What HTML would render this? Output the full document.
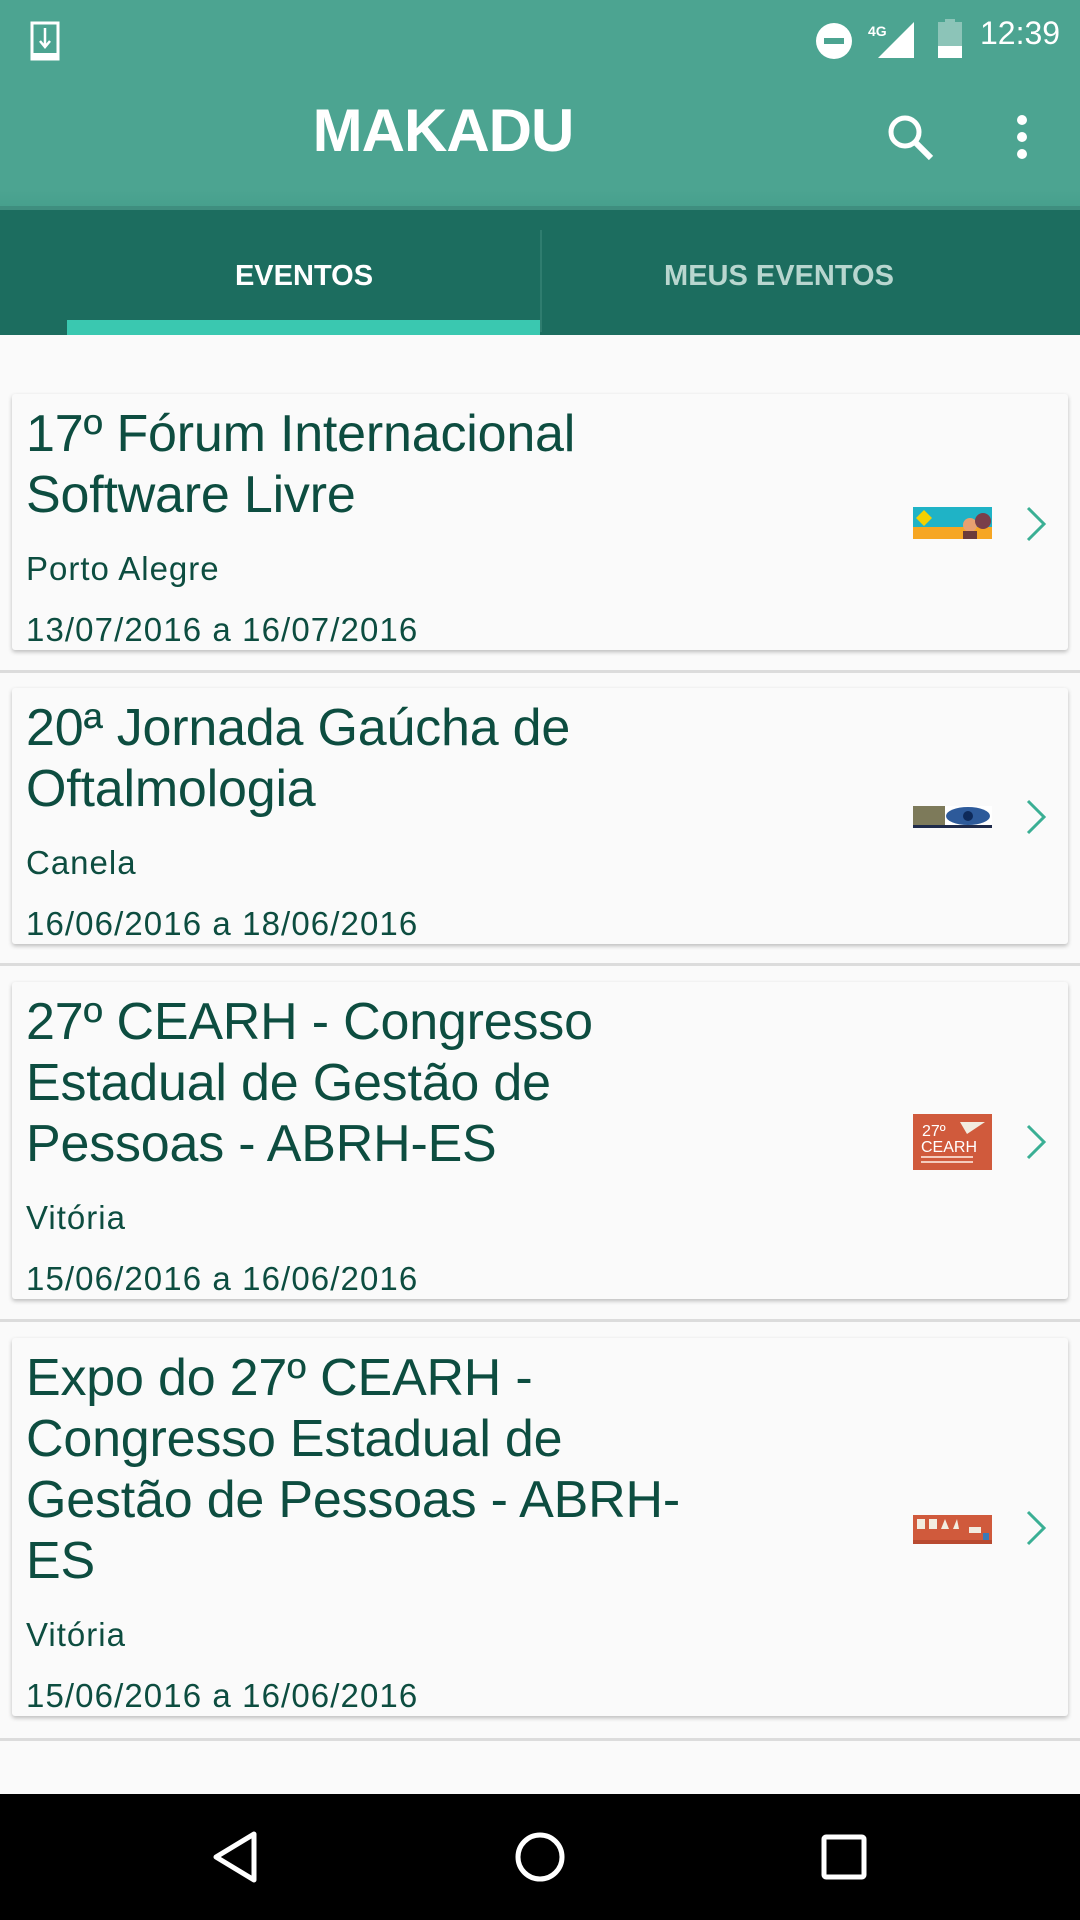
<!DOCTYPE html>
<html><head><meta charset="utf-8"><style>
*{margin:0;padding:0;box-sizing:border-box}
body{width:1080px;height:1920px;overflow:hidden;background:#fafafa;font-family:"Liberation Sans",sans-serif;position:relative}
.top{position:absolute;left:0;top:0;width:1080px;height:206px;background:#4ca491}
.topsh{position:absolute;left:0;top:190px;width:1080px;height:16px;background:linear-gradient(#4ca491,#47a08d)}
.tabs{position:absolute;left:0;top:206px;width:1080px;height:129px;background:#1c6d5f;border-top:4px solid #3f8e7f}
.sb{position:absolute;top:0;height:60px;color:#fff}
.logo{position:absolute;left:0;width:886px;text-align:center;top:96px;font-size:60px;font-weight:bold;color:#fff;letter-spacing:-1px}
.tab{position:absolute;top:260px;font-size:29px;font-weight:bold;text-align:center}
.card{position:absolute;left:12px;width:1056px;background:#fafafa;box-shadow:0 2px 4px rgba(0,0,0,.25);border-radius:3px;padding:10px 0 0 14px;color:#0d4d40}
.t{font-size:52px;line-height:61px;white-space:nowrap;letter-spacing:-0.2px}
.s{font-size:33px;line-height:50px;margin-top:18px;letter-spacing:1px}
.d{font-size:33px;line-height:40px;margin-top:16px;letter-spacing:1.1px}
.line{position:absolute;left:0;width:1080px;height:3px;background:#dcdcdc}
.img{position:absolute;left:900px}
.chev{position:absolute;left:1022px;width:30px;height:40px}
.nav{position:absolute;left:0;top:1794px;width:1080px;height:126px;background:#000}
</style></head><body>
<div class="top"></div><div class="topsh"></div>
<svg class="sb" style="left:30px;top:12px" width="34" height="42" viewBox="0 0 34 42"><rect x="2" y="2" width="26" height="36" fill="none" stroke="#fff" stroke-width="3"/><rect x="2" y="32" width="26" height="6" fill="#fff"/><path d="M15 7v18M10 20l5 6 5-6" stroke="#fff" stroke-width="2.5" fill="none"/></svg>
<svg class="sb" style="left:814px;top:10px" width="180" height="44" viewBox="0 0 180 44"><circle cx="20" cy="23" r="18" fill="#fff"/><rect x="10" y="20" width="20" height="6" fill="#4ca491"/><text x="54" y="18" font-size="14" font-weight="bold" fill="#fff" font-family="Liberation Sans">4G</text><path d="M64 40L100 4V40Z" fill="#fff"/><rect x="124" y="4" width="24" height="36" fill="#8cc4b8"/><rect x="124" y="28" width="24" height="12" fill="#fff"/><rect x="131" y="1" width="10" height="4" fill="#8cc4b8"/></svg>
<div class="sb" style="left:980px;top:15px;font-size:32px">12:39</div>
<div class="logo">MAKADU</div>
<svg style="position:absolute;left:885px;top:112px" width="52" height="52" viewBox="0 0 52 52"><circle cx="20" cy="20" r="14" fill="none" stroke="#fff" stroke-width="5"/><path d="M30 30l16 16" stroke="#fff" stroke-width="6"/></svg>
<svg style="position:absolute;left:1012px;top:114px" width="20" height="46" viewBox="0 0 20 46"><circle cx="10" cy="6" r="5" fill="#fff"/><circle cx="10" cy="23" r="5" fill="#fff"/><circle cx="10" cy="40" r="5" fill="#fff"/></svg>
<div class="tabs"></div>
<div style="position:absolute;left:540px;top:230px;width:2px;height:102px;background:#2f7d6f"></div>
<div style="position:absolute;left:67px;top:320px;width:473px;height:15px;background:#3ac8b0"></div>
<div class="tab" style="left:0;width:608px;color:#fff">EVENTOS</div>
<div class="tab" style="left:542px;width:474px;color:#b8d6cf">MEUS EVENTOS</div>

<div class="card" style="top:394px"><div class="t">17º Fórum Internacional<br>Software Livre</div><div class="s">Porto Alegre</div><div class="d">13/07/2016 a 16/07/2016</div></div>
<div class="line" style="top:670px"></div>
<div class="card" style="top:688px"><div class="t">20ª Jornada Gaúcha de<br>Oftalmologia</div><div class="s">Canela</div><div class="d">16/06/2016 a 18/06/2016</div></div>
<div class="line" style="top:963px"></div>
<div class="card" style="top:982px"><div class="t">27º CEARH - Congresso<br>Estadual de Gestão de<br>Pessoas - ABRH-ES</div><div class="s">Vitória</div><div class="d">15/06/2016 a 16/06/2016</div></div>
<div class="line" style="top:1319px"></div>
<div class="card" style="top:1338px"><div class="t">Expo do 27º CEARH -<br>Congresso Estadual de<br>Gestão de Pessoas - ABRH-<br>ES</div><div class="s">Vitória</div><div class="d">15/06/2016 a 16/06/2016</div></div>
<div class="line" style="top:1738px"></div>

<svg class="img" style="left:913px;top:507px" width="79" height="32"><rect width="79" height="20" fill="#1fb3c6"/><rect y="20" width="79" height="12" fill="#f6a623"/><circle cx="57" cy="18" r="7" fill="#e8a070"/><rect x="50" y="24" width="14" height="8" fill="#6b3a3a"/><circle cx="70" cy="14" r="8" fill="#7a3f4a"/><polygon points="11,3 19,11 11,19 3,11" fill="#f5d000"/></svg>
<svg class="img" style="left:913px;top:806px" width="79" height="22"><rect width="79" height="22" fill="#fff"/><rect width="32" height="20" fill="#7d7a5a"/><ellipse cx="55" cy="10" rx="22" ry="9" fill="#2d5a9a"/><circle cx="55" cy="10" r="5" fill="#0e2a5a"/><rect y="19" width="79" height="3" fill="#1e2a4a"/></svg>
<svg class="img" style="left:913px;top:1114px" width="79" height="56"><rect width="79" height="56" fill="#d05a3c"/><text x="9" y="22" font-size="16" fill="#fff" font-family="Liberation Sans">27º</text><text x="8" y="38" font-size="16" fill="#fff" font-family="Liberation Sans">CEARH</text><rect x="8" y="42" width="52" height="2" fill="#f4cbbd"/><rect x="8" y="47" width="52" height="2" fill="#f4cbbd"/><polygon points="47,8 72,8 54,20" fill="#f2ece0"/></svg>
<svg class="img" style="left:913px;top:1515px" width="79" height="29"><rect width="79" height="29" fill="#d05a3c"/><rect x="4" y="4" width="8" height="10" fill="#f2ece0"/><rect x="16" y="4" width="8" height="10" fill="#f2ece0"/><polygon points="28,14 32,4 36,14" fill="#f2ece0"/><polygon points="40,14 44,4 46,14" fill="#f2ece0"/><rect x="56" y="12" width="12" height="6" fill="#f2ece0"/><rect x="70" y="18" width="6" height="8" fill="#3a7ab8"/><rect y="25" width="79" height="4" fill="#b84a30"/></svg>

<svg class="chev" style="top:504px" viewBox="0 0 30 40"><path d="M6 4l16 16L6 36" fill="none" stroke="#3aaf94" stroke-width="3"/></svg>
<svg class="chev" style="top:797px" viewBox="0 0 30 40"><path d="M6 4l16 16L6 36" fill="none" stroke="#3aaf94" stroke-width="3"/></svg>
<svg class="chev" style="top:1122px" viewBox="0 0 30 40"><path d="M6 4l16 16L6 36" fill="none" stroke="#3aaf94" stroke-width="3"/></svg>
<svg class="chev" style="top:1508px" viewBox="0 0 30 40"><path d="M6 4l16 16L6 36" fill="none" stroke="#3aaf94" stroke-width="3"/></svg>

<div class="nav"></div>
<svg style="position:absolute;left:0;top:1794px" width="1080" height="126"><path d="M254 40V86L216 63Z" fill="none" stroke="#fff" stroke-width="5" stroke-linejoin="round"/><circle cx="540" cy="63" r="22" fill="none" stroke="#fff" stroke-width="5"/><rect x="824" y="43" width="40" height="40" rx="2" fill="none" stroke="#fff" stroke-width="5"/></svg>
</body></html>
